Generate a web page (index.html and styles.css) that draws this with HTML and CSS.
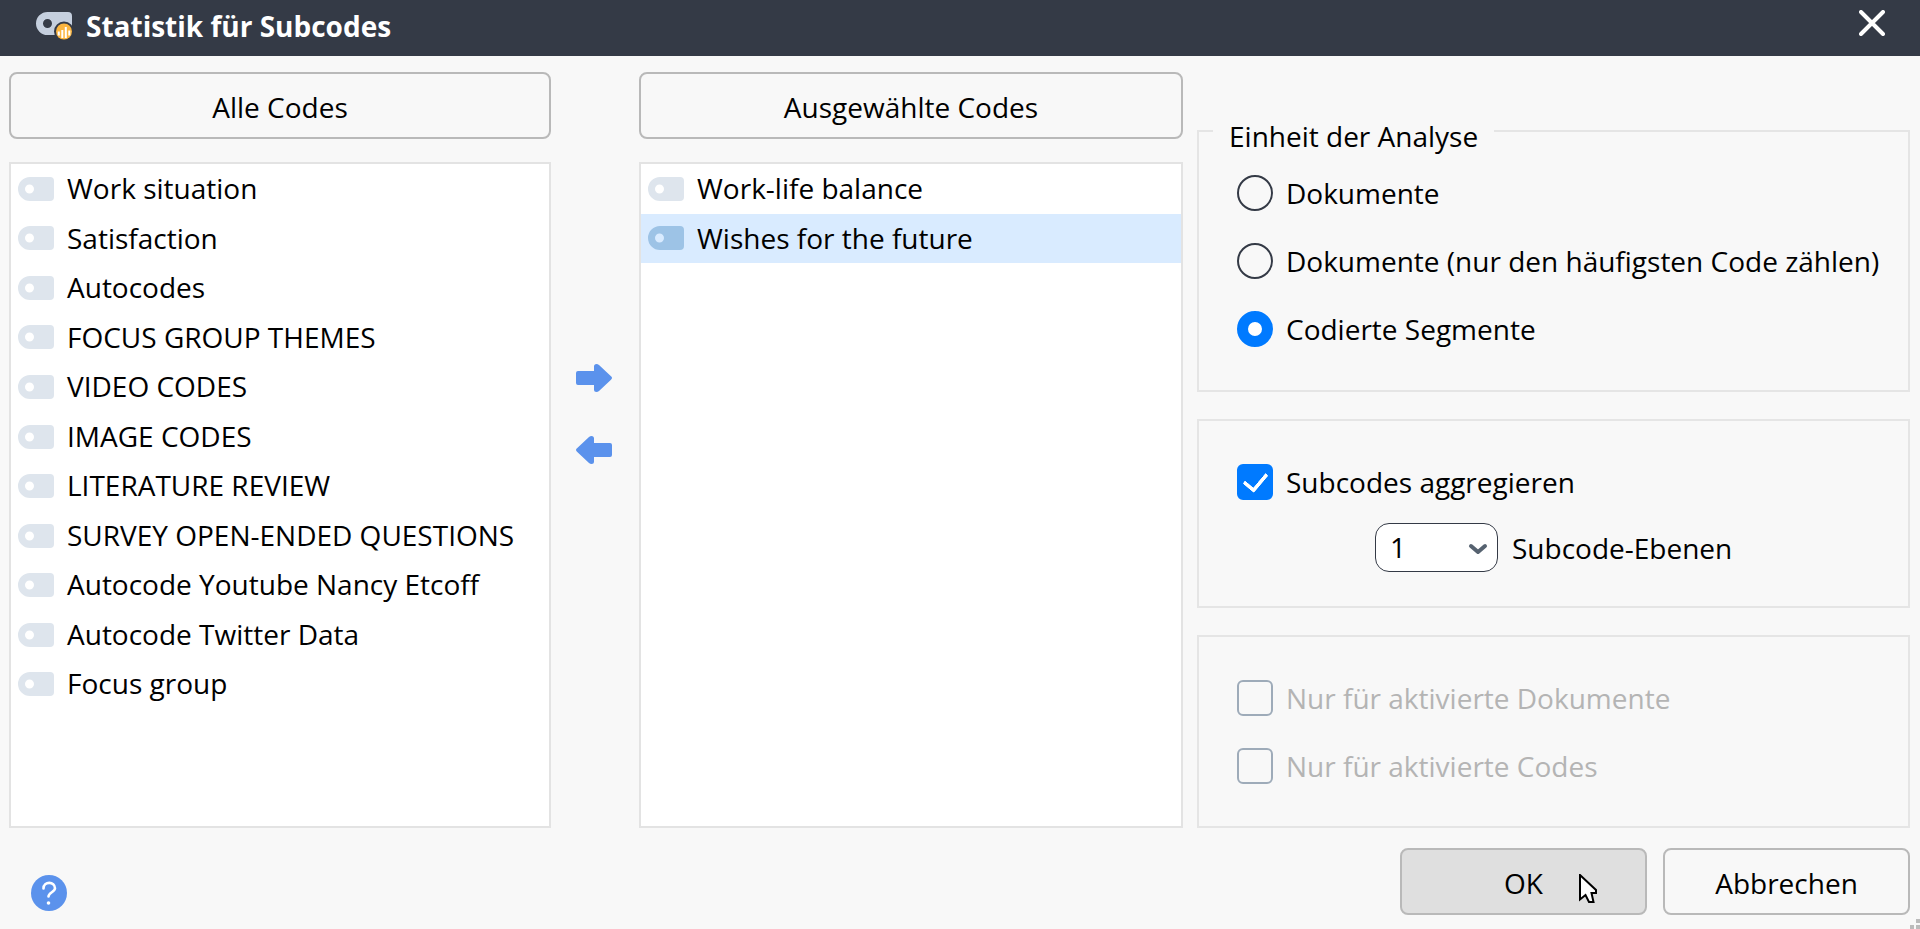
FILE: index.html
```html
<!DOCTYPE html>
<html lang="de">
<head>
<meta charset="UTF-8">
<meta name="viewport" content="width=device-width, initial-scale=1.0">
<title>Statistik für Subcodes</title>
<link rel="stylesheet" href="styles.css">
</head>
<body>
<!-- Shared icons -->
<svg class="sprite" width="0" height="0" aria-hidden="true">
    <symbol id="code" viewBox="0 0 36 24">
        <path fill-rule="evenodd" d="M12 0H32a4 4 0 0 1 4 4V20a4 4 0 0 1-4 4H12A12 12 0 0 1 12 0zM11.500 7.500a4.500 4.500 0 1 0 0 9a4.500 4.500 0 0 0 0-9z"/>
    </symbol>
    <symbol id="arrow" viewBox="0 0 36 28">
        <path d="M2 7H18V2.500Q18 0 20.500 0Q21.800 0 23 1L35 12.300Q37 14 35 15.700L23 27Q21.800 28 20.500 28Q18 28 18 25.500V21H2Q0 21 0 19V9Q0 7 2 7z"/>
    </symbol>
</svg>

<header class="titlebar">
    <svg class="app-icon" viewBox="0 0 36 28">
        <path fill="#c5cfde" fill-rule="evenodd" d="M11.500 0H32a4 4 0 0 1 4 4V23H11.500A11.500 11.500 0 0 1 11.500 0zM11.500 7a4.500 4.500 0 1 0 0 9a4.500 4.500 0 0 0 0-9z"/>
        <circle cx="28" cy="19.500" r="10" fill="#343a46"/>
        <circle cx="28" cy="19.500" r="8" fill="#fbb540"/>
        <path d="M22.800 19.500v4M26.300 18v8M29.800 15v11M33.300 18.500v5" stroke="#fff" stroke-width="2"/>
    </svg>
    <h1>Statistik für Subcodes</h1>
    <button class="btn-close" aria-label="Schließen">
        <svg viewBox="0 0 26 26"><path d="M2 2L24 24M24 2L2 24" stroke="#fff" stroke-width="4" stroke-linecap="round"/></svg>
    </button>
</header>

<main class="content">
    <section class="column">
        <button class="btn">Alle Codes</button>
        <ul class="code-list">
            <li><svg><use href="#code"/></svg>Work situation</li>
            <li><svg><use href="#code"/></svg>Satisfaction</li>
            <li><svg><use href="#code"/></svg>Autocodes</li>
            <li><svg><use href="#code"/></svg>FOCUS GROUP THEMES</li>
            <li><svg><use href="#code"/></svg>VIDEO CODES</li>
            <li><svg><use href="#code"/></svg>IMAGE CODES</li>
            <li><svg><use href="#code"/></svg>LITERATURE REVIEW</li>
            <li><svg><use href="#code"/></svg>SURVEY OPEN-ENDED QUESTIONS</li>
            <li><svg><use href="#code"/></svg>Autocode Youtube Nancy Etcoff</li>
            <li><svg><use href="#code"/></svg>Autocode Twitter Data</li>
            <li><svg><use href="#code"/></svg>Focus group</li>
        </ul>
    </section>

    <div class="transfer">
        <button aria-label="Hinzufügen"><svg><use href="#arrow"/></svg></button>
        <button class="back" aria-label="Entfernen"><svg><use href="#arrow"/></svg></button>
    </div>

    <section class="column">
        <button class="btn">Ausgewählte Codes</button>
        <ul class="code-list">
            <li><svg><use href="#code"/></svg>Work-life balance</li>
            <li class="selected"><svg><use href="#code"/></svg>Wishes for the future</li>
        </ul>
    </section>

    <section class="options">
        <fieldset class="unit">
            <legend>Einheit der Analyse</legend>
            <div class="choices">
                <label><input type="radio" name="unit">Dokumente</label>
                <label><input type="radio" name="unit">Dokumente (nur den häufigsten Code zählen)</label>
                <label><input type="radio" name="unit" checked>Codierte Segmente</label>
            </div>
        </fieldset>
        <fieldset class="aggregate">
            <label><input type="checkbox" checked>Subcodes aggregieren</label>
            <div class="levels">
                <div class="select">
                    <select id="levels">
                        <option>1</option>
                        <option>2</option>
                        <option>3</option>
                    </select>
                    <svg viewBox="0 0 20 12"><path d="M3 3L10 9L17 3" fill="none" stroke="#566270" stroke-width="4" stroke-linecap="round" stroke-linejoin="round"/></svg>
                </div>
                <label for="levels">Subcode-Ebenen</label>
            </div>
        </fieldset>
        <fieldset class="activated" disabled>
            <div class="choices">
                <label><input type="checkbox">Nur für aktivierte Dokumente</label>
                <label><input type="checkbox">Nur für aktivierte Codes</label>
            </div>
        </fieldset>
    </section>
</main>

<footer class="actions">
    <button class="btn-help" aria-label="Hilfe">
        <svg viewBox="0 0 36 36">
            <circle cx="18" cy="18" r="18" fill="#5b92ec"/>
            <path d="M12.500 13.500C12.500 6 24 6 24 13.200C24 17 17.500 17.500 17.500 21.500" fill="none" stroke="#fff" stroke-width="2.600" stroke-linecap="round"/>
            <circle cx="17.500" cy="28" r="1.800" fill="#fff"/>
        </svg>
    </button>
    <button class="btn btn-ok">OK
        <svg class="cursor" viewBox="0 0 18 29"><path d="M1 1V25.500L6.500 21L10 28H14.500L12.500 19H17V16z" fill="#fff" stroke="#000" stroke-width="2"/></svg>
    </button>
    <button class="btn">Abbrechen</button>
</footer>
<svg class="grip" viewBox="0 0 10 10"><path d="M6 0h4v4H6zM0 6h4v4H0zM6 6h4v4H6z" fill="#bbb"/></svg>
</body>
</html>
```
FILE: styles.css
```css
* {
    box-sizing: border-box;
}

body {
    display: flex;
    flex-direction: column;
    min-height: 100vh;
    margin: 0;
    position: relative;
    background-color: #f8f8f8;
    color: #000;
    font-family: "Open Sans", "Noto Sans", sans-serif;
    font-size: 28px;
    line-height: 36px;
}

button, select {
    font: inherit;
    color: inherit;
    padding: 0;
    margin: 0;
    border: none;
    background: none;
}

button svg {
    display: block;
}

.sprite, .grip, .cursor {
    position: absolute;
}

/* Title bar */
.titlebar {
    display: flex;
    align-items: center;
    height: 56px;
    padding: 0 35px 4px 36px;
    background-color: #343a46;
    color: #fff;
}

.titlebar h1 {
    flex: 1;
    margin: 0;
    font-size: 28px;
    font-weight: bold;
}

.app-icon {
    width: 36px;
    height: 28px;
    margin-right: 14px;
}

.btn-close {
    width: 26px;
    height: 32px;
    padding-bottom: 6px;
}

.btn-close svg {
    width: 26px;
    height: 26px;
}

/* Columns */
.content {
    flex: 1;
    display: grid;
    grid-template-columns: minmax(0, 542fr) 88px minmax(0, 544fr) 14px minmax(0, 713fr);
    padding: 16px 10px 0 9px;
}

.column {
    display: flex;
    flex-direction: column;
    gap: 23px;
}

.btn {
    height: 67px;
    padding-top: 2px;
    border: 2px solid #b9b9b9;
    border-radius: 8px;
}

.code-list {
    flex: 1;
    margin: 0;
    padding: 0;
    list-style: none;
    background-color: #fff;
    border: 2px solid #e3e3e3;
    line-height: 1.77;
}

.code-list li {
    display: flex;
    align-items: center;
    gap: 13px;
    padding-left: 7px;
}

.code-list svg {
    width: 36px;
    height: 24px;
    fill: #dee5ed;
}

.code-list .selected {
    background-color: #d9ebff;
}

.code-list .selected svg {
    fill: #9dc3e6;
}

.transfer {
    display: flex;
    flex-direction: column;
    align-items: center;
    gap: 44px;
    padding: 292px 2px 0 0;
}

.transfer svg {
    width: 36px;
    height: 28px;
    fill: #5b92ec;
}

.transfer .back {
    transform: scaleX(-1);
}

/* Options */
.options {
    grid-column: 5;
    display: flex;
    flex-direction: column;
    gap: 27px;
    padding-top: 39px;
}

fieldset {
    min-width: 0;
    margin: 0;
    padding: 0 0 0 38px;
    border: 2px solid #e5e5e5;
}

legend {
    margin-left: -24px;
    padding: 10px 16px 0 16px;
    line-height: 30px;
}

.unit {
    padding-bottom: 43px;
}

.aggregate {
    padding-top: 43px;
    padding-bottom: 34px;
}

.activated {
    flex: 1;
    padding-top: 43px;
    color: #b4b4b4;
}

.choices {
    display: flex;
    flex-direction: column;
    gap: 32px;
}

.unit .choices {
    padding-top: 24px;
}

fieldset label {
    display: flex;
    align-items: center;
    gap: 13px;
}

input {
    appearance: none;
    flex: none;
    width: 36px;
    height: 36px;
    margin: 0;
    border: 2px solid #343a46;
}

input[type="radio"] {
    border-radius: 50%;
}

input[type="radio"]:checked {
    border: 11px solid #007aff;
    background-color: #fff;
}

input[type="checkbox"] {
    border-radius: 6px;
}

input[type="checkbox"]:checked {
    display: grid;
    place-items: center;
    border-color: #007aff;
    background-color: #007aff;
}

input[type="checkbox"]:checked::before {
    content: "";
    width: 11px;
    height: 19px;
    margin-bottom: 5px;
    border: solid #fff;
    border-width: 0 4px 4px 0;
    border-radius: 2px;
    transform: rotate(40deg);
}

input:disabled {
    border-color: #9eabb9;
}

.levels {
    display: flex;
    align-items: center;
    gap: 14px;
    padding: 23px 0 0 138px;
}

.select {
    position: relative;
}

.select select {
    display: block;
    appearance: none;
    width: 123px;
    height: 49px;
    padding: 0 14px 2px 14px;
    background-color: #fff;
    border: 1px solid #343a46;
    border-radius: 14px;
}

.select svg {
    position: absolute;
    right: 10px;
    top: 20px;
    width: 20px;
    height: 12px;
    pointer-events: none;
}

/* Footer */
.actions {
    display: flex;
    align-items: center;
    gap: 16px;
    padding: 20px 10px 14px 31px;
}

.actions .btn {
    width: 247px;
}

.btn-help {
    margin: 22px auto 0 0;
}

.btn-help svg {
    width: 36px;
    height: 36px;
}

.actions .btn-ok {
    position: relative;
    background-color: #dfdfdf;
}

.cursor {
    top: 24px;
    right: 48px;
    width: 18px;
    height: 29px;
}

.grip {
    right: 0;
    bottom: 0;
    width: 10px;
    height: 10px;
}
```
